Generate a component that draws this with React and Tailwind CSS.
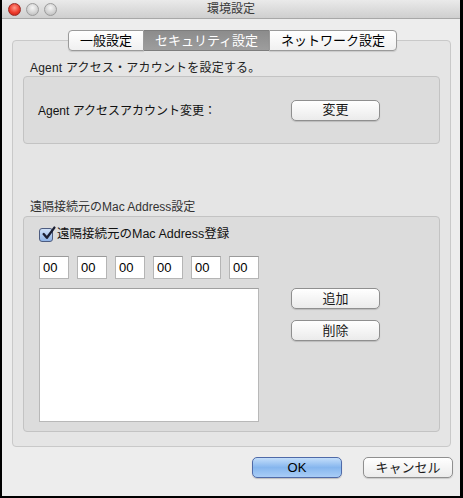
import React from "react";

const font = { fontFamily: '"Liberation Sans", "Noto Sans CJK JP", sans-serif' };

const Light = ({ red }) => (
  <div
    className={
      red
        ? "w-[13px] h-[13px] rounded-full border border-[#9b2a24] bg-[radial-gradient(circle_at_50%_35%,#ff9a8a_0%,#ee3b2c_55%,#b91d12_100%)]"
        : "w-[13px] h-[13px] rounded-full border border-[#9c9c9c] bg-[radial-gradient(circle_at_50%_35%,#f6f6f6_0%,#d0d0d0_60%,#b4b4b4_100%)]"
    }
  />
);

const Button = ({ children, className = "" }) => (
  <div
    className={
      "h-[21px] rounded-[5px] border border-[#8f8f8f] bg-gradient-to-b from-white to-[#ebebeb] shadow-[0_1px_1px_rgba(0,0,0,0.15)] flex items-center justify-center text-[13px] text-[#1a1a1a] " +
      className
    }
  >
    {children}
  </div>
);

const MacField = () => (
  <div className="w-[30px] h-[23px] bg-white border border-[#b5b5b5] border-t-[#9a9a9a] flex items-center pl-[3px] text-[13px] text-black">
    00
  </div>
);

export default function App() {
  return (
    <div className="w-[463px] h-[498px] bg-black pl-[2px] pr-[3px] pb-[2px]" style={font}>
      <div className="w-full h-full bg-[#ededed] flex flex-col">
        {/* title bar */}
        <div className="h-[19px] shrink-0 bg-gradient-to-b from-[#eaeaea] to-[#cfcfcf] border-b border-[#a8a8a8] flex items-center relative">
          <div className="flex items-center gap-[5px] pl-[6px]">
            <Light red />
            <Light />
            <Light />
          </div>
          <div className="absolute inset-0 flex items-center justify-center text-[12px] text-[#3a3a3a]">
            環境設定
          </div>
        </div>

        {/* tabs */}
        <div className="mt-[11px] flex pl-[66px] relative z-10 h-[21px]">
          <div className="w-[76px] h-[21px] border border-[#9a9a9a] rounded-l-[4px] bg-gradient-to-b from-white to-[#f0f0f0] flex items-center justify-center text-[13px] text-black shadow-[0_1px_1px_rgba(0,0,0,0.12)]">
            一般設定
          </div>
          <div className="w-[125px] h-[21px] border-y border-[#7d7d7d] bg-gradient-to-b from-[#8c8c8c] to-[#9d9d9d] flex items-center justify-center text-[13px] text-white">
            セキュリティ設定
          </div>
          <div className="w-[128px] h-[21px] border border-[#9a9a9a] rounded-r-[4px] bg-gradient-to-b from-white to-[#f0f0f0] flex items-center justify-center text-[13px] text-black shadow-[0_1px_1px_rgba(0,0,0,0.12)]">
            ネットワーク設定
          </div>
        </div>

        {/* outer group */}
        <div className="-mt-[11px] ml-[10px] mr-[9px] h-[407px] rounded-[4px] border border-[#c9c9c9] bg-[#e5e5e5] pt-[19px] px-[10px] flex flex-col">
          <div className="h-[16px] pl-[7px] text-[12px] leading-[16px] text-[#222] tracking-[0.2px]">
            Agent アクセス・アカウントを設定する。
          </div>
          <div className="h-[68px] rounded-[4px] border border-[#c3c3c3] bg-[#dcdcdc] flex items-center pl-[14px]">
            <div className="w-[253px] text-[12px] text-[#111] pt-[1px]">Agent アクセスアカウント変更：</div>
            <Button className="w-[89px]">変更</Button>
          </div>

          <div className="mt-[55px] h-[17px] pl-[7px] text-[12px] leading-[16px] text-[#333]">
            遠隔接続元のMac Address設定
          </div>
          <div className="h-[216px] rounded-[4px] border border-[#c3c3c3] bg-[#dcdcdc] pt-[9px] pl-[15px] flex flex-col">
            <div className="flex items-center h-[17px]">
              <div className="w-[14px] h-[14px] rounded-[3px] border border-[#4d5c80] bg-gradient-to-b from-[#cfe0f7] to-[#8fb3e6] relative">
                <svg viewBox="0 0 14 14" className="absolute -top-[3px] left-[1px] w-[15px] h-[15px]">
                  <path d="M2.5 7.5 L5.5 11 L12.5 1.5" fill="none" stroke="#1b1f33" strokeWidth="2.2" strokeLinecap="round" strokeLinejoin="round" />
                </svg>
              </div>
              <div className="ml-[4px] text-[12.5px] text-[#111]">遠隔接続元のMac Address登録</div>
            </div>
            <div className="mt-[13px] flex gap-[8px]">
              <MacField />
              <MacField />
              <MacField />
              <MacField />
              <MacField />
              <MacField />
            </div>
            <div className="mt-[9px] flex">
              <div className="w-[220px] h-[134px] bg-white border border-[#b8b8b8] border-t-[#a0a0a0]" />
              <div className="ml-[32px] flex flex-col gap-[11px]">
                <Button className="w-[89px]">追加</Button>
                <Button className="w-[89px]">削除</Button>
              </div>
            </div>
          </div>
        </div>

        {/* bottom buttons */}
        <div className="mt-[10px] flex pl-[250px] gap-[21px]">
          <div className="w-[90px] h-[21px] rounded-[5px] border border-[#4f6aa8] bg-gradient-to-b from-[#c4defa] via-[#86b6ee] to-[#a9cdf6] shadow-[0_1px_1px_rgba(0,0,0,0.2)] flex items-center justify-center text-[13px] text-black">
            OK
          </div>
          <Button className="w-[90px]">キャンセル</Button>
        </div>
      </div>
    </div>
  );
}
